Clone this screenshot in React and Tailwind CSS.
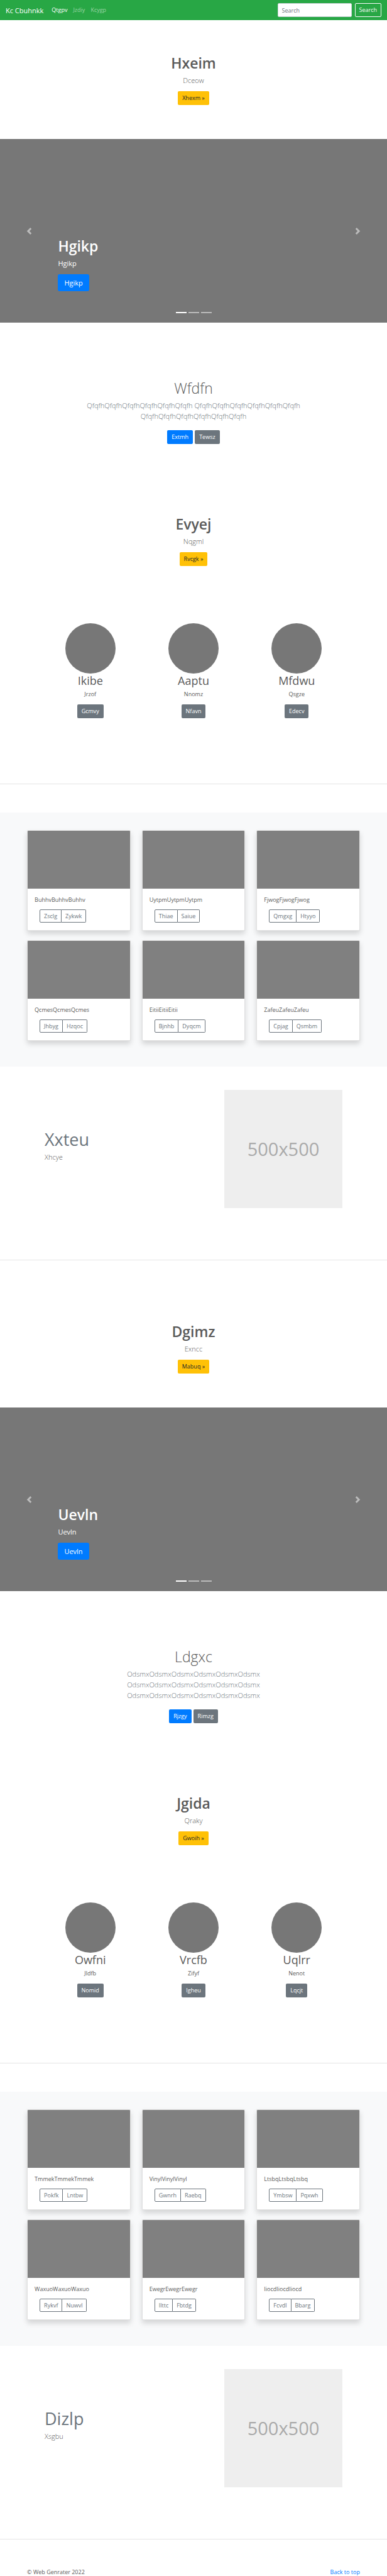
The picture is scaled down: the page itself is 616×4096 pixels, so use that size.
import { useId } from "react";

const solid = {
  warning: "bg-[#ffc107] text-[#212529]",
  primary: "bg-[#007bff] text-white",
  secondary: "bg-[#6c757d] text-white",
};

function Button({ tone, children }) {
  return (
    <button type="button" className={`h-[22px] rounded-[2px] px-[7px] text-[9px] leading-[14px] ${solid[tone]}`}>
      {children}
    </button>
  );
}

function Navbar() {
  const searchId = useId();
  return (
    <header className="flex h-8 items-center bg-[#28a745] px-[9px]">
      <a href="#top" className="mr-[13px] text-[11px] leading-[17px] text-white">Kc Cbuhnkk</a>
      <nav className="flex gap-[9px] text-[9px] leading-[14px]">
        <a href="#qtgpv" className="text-white">Qtgpv</a>
        <a href="#jzdiy" className="text-white/50">Jzdiy</a>
        <a href="#kcygp" className="text-white/50">Kcygp</a>
      </nav>
      <form className="ml-auto flex gap-[5px]" onSubmit={(e) => e.preventDefault()}>
        <input
          id={searchId}
          type="text"
          aria-label="Search"
          placeholder="Search"
          className="h-[22px] w-[118px] rounded-[2px] border border-[#ced4da] bg-white px-[6px] py-0 text-[9px] leading-[14px] text-[#495057] placeholder:text-[#6c757d]"
        />
        <button type="submit" className="h-[22px] rounded-[2px] border border-[#f8f9fa] px-[6px] text-[9px] leading-[14px] text-[#f8f9fa]">
          Search
        </button>
      </form>
    </header>
  );
}

function Intro({ title, text, action }) {
  return (
    <section className="flex flex-col items-center pt-[55px] pb-[54px]">
      <h1 className="mb-[5px] text-[23px] leading-[27px] font-semibold">{title}</h1>
      <p className="mb-[9px] text-[11px] leading-[17px] font-light">{text}</p>
      <Button tone="warning">{action} »</Button>
    </section>
  );
}

function Chevron({ flip }) {
  return (
    <svg viewBox="0 0 8 8" className={flip ? "size-[11px] rotate-180" : "size-[11px]"} fill="#fff" aria-hidden="true">
      <path d="M5.25 0l-4 4 4 4 1.5-1.5L4.25 4l2.5-2.5L5.25 0z" />
    </svg>
  );
}

function Carousel({ label }) {
  return (
    <section className="relative flex h-[292px] flex-col items-start bg-[#777] px-[15%] pt-[157px] text-white">
      <h2 className="mb-[5px] text-[23px] leading-[27px] font-semibold">{label}</h2>
      <p className="mb-[9px] text-[11px] leading-[17px]">{label}</p>
      <button type="button" className="h-[27px] rounded-[3px] bg-[#007bff] px-[10px] text-[11px] leading-[17px]">
        {label}
      </button>
      <button type="button" aria-label="Previous" className="absolute inset-y-0 left-0 flex w-[15%] items-center justify-center opacity-50">
        <Chevron />
      </button>
      <button type="button" aria-label="Next" className="absolute inset-y-0 right-0 flex w-[15%] items-center justify-center opacity-50">
        <Chevron flip />
      </button>
      <div className="absolute inset-x-0 bottom-[15px] flex justify-center gap-[3px]">
        <span className="h-[2px] w-[17px] bg-white" />
        <span className="h-[2px] w-[17px] bg-white/50" />
        <span className="h-[2px] w-[17px] bg-white/50" />
      </div>
    </section>
  );
}

function Summary({ title, text, primary, secondary }) {
  return (
    <section className="flex flex-col items-center pt-[91px] pb-[59px] text-center">
      <h2 className="mb-[5px] text-[23px] leading-[27px] font-light">{title}</h2>
      <p className="mb-[14px] max-w-[370px] text-[11px] leading-[17px] font-light text-[#6c757d]">{text}</p>
      <div className="flex gap-[3px]">
        <Button tone="primary">{primary}</Button>
        <Button tone="secondary">{secondary}</Button>
      </div>
    </section>
  );
}

function People({ items }) {
  return (
    <section className="mx-auto grid w-4/5 grid-cols-3 pt-[37px] pb-[104px]">
      {items.map(([name, text, action]) => (
        <article key={name} className="flex flex-col items-center">
          <div className="size-20 rounded-full bg-[#777]" />
          <h2 className="mb-[4px] text-[18px] leading-[22px]">{name}</h2>
          <p className="mb-[9px] text-[9px] leading-[14px]">{text}</p>
          <Button tone="secondary">{action}</Button>
        </article>
      ))}
    </section>
  );
}

function Divider() {
  return <hr className="mb-[45px] border-t border-black/10" />;
}

function Album({ items }) {
  return (
    <section className="grid grid-cols-3 gap-x-[18px] gap-y-[15px] bg-[#f8f9fa] px-[7%] pt-[28px] pb-[41px]">
      {items.map(([text, view, edit]) => (
        <article key={text} className="overflow-hidden rounded-[2px] border border-black/12 bg-white shadow-[0_5px_9px_rgba(0,0,0,0.15)]">
          <div className="h-[92px] bg-[#808080]" />
          <div className="px-[11px] pt-[11px] pb-[12px]">
            <p className="mb-[8px] text-[9px] leading-[14px]">{text}</p>
            <div className="ml-[8px] flex text-[9px] leading-[14px] text-[#6c757d]">
              <button type="button" className="h-[21px] rounded-l-[2px] border border-[#6c757d] px-[6px]">{view}</button>
              <button type="button" className="h-[21px] rounded-r-[2px] border border-l-0 border-[#6c757d] px-[6px]">{edit}</button>
            </div>
          </div>
        </article>
      ))}
    </section>
  );
}

function Feature({ title, text }) {
  return (
    <section className="mt-[37px] mb-[82px] flex items-center justify-between px-[71px]">
      <div className="mb-[12px]">
        <h2 className="mb-[2px] text-[27px] leading-[34px] text-[#6c757d]">{title}</h2>
        <p className="text-[11px] leading-[17px] font-light">{text}</p>
      </div>
      <div className="flex size-[188px] items-center justify-center bg-[#eee] text-[29px] leading-[34px] text-[#aaa]">
        500x500
      </div>
    </section>
  );
}

export default function App() {
  return (
    <div id="top" className="bg-white font-['Open_Sans','Noto_Sans',sans-serif] text-[#5a5a5a]">
      <Navbar />
      <main>
        <Intro title="Hxeim" text="Dceow" action="Xhexm" />
        <Carousel label="Hgikp" />
        <Summary
          title="Wfdfn"
          text="QfqfhQfqfhQfqfhQfqfhQfqfhQfqfh QfqfhQfqfhQfqfhQfqfhQfqfhQfqfh QfqfhQfqfhQfqfhQfqfhQfqfhQfqfh"
          primary="Extmh"
          secondary="Tewsz"
        />
        <Intro title="Evyej" text="Nqgml" action="Rvcgk" />
        <People
          items={[
            ["Ikibe", "Jrzof", "Gcmvy"],
            ["Aaptu", "Nnomz", "Nfavn"],
            ["Mfdwu", "Qsgze", "Edecv"],
          ]}
        />
        <Divider />
        <Album
          items={[
            ["BuhhvBuhhvBuhhv", "Zsclg", "Zykwk"],
            ["UytpmUytpmUytpm", "Thiae", "Saiue"],
            ["FjwogFjwogFjwog", "Qmgxg", "Htyyo"],
            ["QcmesQcmesQcmes", "Jhbyg", "Hzqoc"],
            ["EitiiEitiiEitii", "Bjnhb", "Dyqcm"],
            ["ZafeuZafeuZafeu", "Cpjag", "Qsmbm"],
          ]}
        />
        <Feature title="Xxteu" text="Xhcye" />
        <Divider />
        <Intro title="Dgimz" text="Exncc" action="Mabuq" />
        <Carousel label="Uevln" />
        <Summary
          title="Ldgxc"
          text="OdsmxOdsmxOdsmxOdsmxOdsmxOdsmx OdsmxOdsmxOdsmxOdsmxOdsmxOdsmx OdsmxOdsmxOdsmxOdsmxOdsmxOdsmx"
          primary="Rjzgy"
          secondary="Rimzg"
        />
        <Intro title="Jgida" text="Qraky" action="Gwoih" />
        <People
          items={[
            ["Owfni", "Jldfb", "Nomid"],
            ["Vrcfb", "Zifyf", "Igheu"],
            ["Uqlrr", "Nenot", "Lqcjt"],
          ]}
        />
        <Divider />
        <Album
          items={[
            ["TmmekTmmekTmmek", "Pokfk", "Lntbw"],
            ["VinylVinylVinyl", "Gwnrh", "Raebq"],
            ["LtsbqLtsbqLtsbq", "Ymbsw", "Pqxwh"],
            ["WaxuoWaxuoWaxuo", "Rykvf", "Nuwvl"],
            ["EwegrEwegrEwegr", "Ilttc", "Fbtdg"],
            ["IiocdIiocdIiocd", "Fcvdl", "Bbarg"],
          ]}
        />
        <Feature title="Dizlp" text="Xsgbu" />
        <Divider />
      </main>
      <footer className="flex justify-between px-[7%] text-[9px] leading-[13px]">
        <p>© Web Genrater 2022</p>
        <a href="#top" className="text-[#007bff]">Back to top</a>
      </footer>
    </div>
  );
}
